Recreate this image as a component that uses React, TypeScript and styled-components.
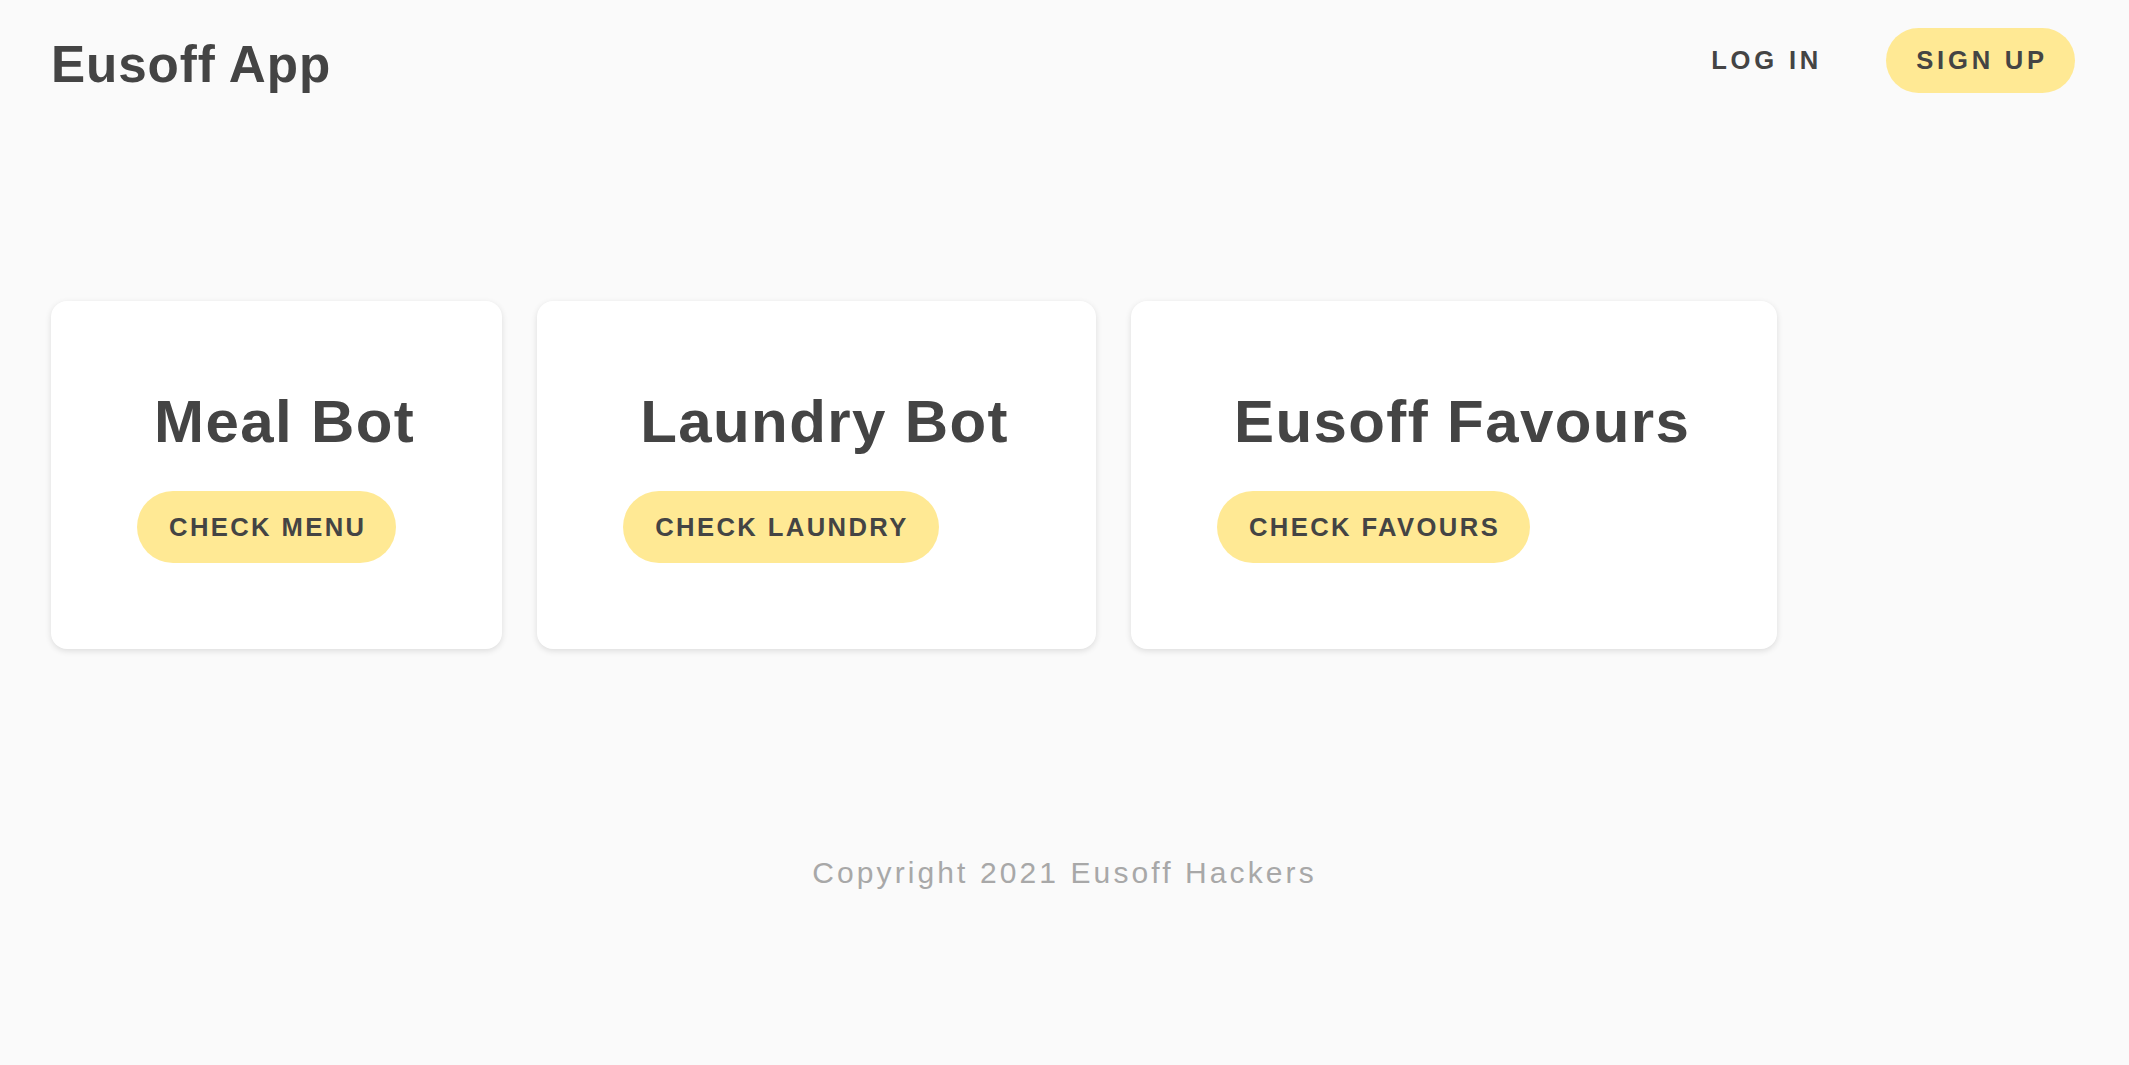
import React from "react";
import styled, { createGlobalStyle } from "styled-components";

const GlobalStyle = createGlobalStyle`
  html, body {
    margin: 0;
    padding: 0;
    background: #fafafa;
    font-family: "Liberation Sans", Arial, Helvetica, sans-serif;
    color: #444444;
  }
  * { box-sizing: border-box; }
`;

const Page = styled.div`
  min-height: 1065px;
  background: #fafafa;
  display: flex;
  flex-direction: column;
`;

const Header = styled.header`
  display: flex;
  align-items: flex-start;
  justify-content: space-between;
  padding: 28px 54px 0 51px;
`;

const Brand = styled.h1`
  margin: 7px 0 0 0;
  font-size: 51.2px;
  font-weight: 700;
  letter-spacing: 0.9px;
  line-height: normal;
  color: #444444;
`;

const Nav = styled.nav`
  display: flex;
  align-items: center;
  gap: 40px;
`;

const NavButton = styled.button<{ $filled?: boolean }>`
  font-family: "Liberation Sans", Arial, Helvetica, sans-serif;
  font-size: 25.6px;
  font-weight: 700;
  letter-spacing: 3.8px;
  line-height: normal;
  color: #444444;
  height: 65px;
  padding: ${(p) => (p.$filled ? "0 27px 0 30px" : "0 24px 0 27px")};
  border: none;
  border-radius: 33px;
  background: ${(p) => (p.$filled ? "#ffe994" : "transparent")};
  cursor: pointer;
`;

const CardRow = styled.section`
  display: flex;
  align-items: flex-start;
  gap: 35px;
  padding: 207px 0 0 51px;
`;

const Card = styled.div`
  background: #ffffff;
  border-radius: 16px;
  box-shadow: 0 2px 6px rgba(0, 0, 0, 0.12);
  padding: 86px 87px 86px 86px;
  display: flex;
  flex-direction: column;
  align-items: flex-start;
`;

const CardTitle = styled.h2`
  margin: 0 0 35px 17px;
  font-size: 60px;
  font-weight: 700;
  letter-spacing: 1.4px;
  line-height: normal;
  white-space: nowrap;
  color: #444444;
`;

const CardButton = styled.button`
  font-family: "Liberation Sans", Arial, Helvetica, sans-serif;
  font-size: 25.6px;
  font-weight: 700;
  letter-spacing: 2.4px;
  line-height: normal;
  color: #444444;
  height: 72px;
  padding: 0 30px 0 32px;
  border: none;
  border-radius: 36px;
  background: #ffe994;
  white-space: nowrap;
  cursor: pointer;
`;

const Footer = styled.footer`
  padding-top: 207px;
  text-align: center;
  font-size: 30px;
  letter-spacing: 3.1px;
  line-height: normal;
  color: #a8a8a8;
`;

const cards = [
  { title: "Meal Bot", action: "CHECK MENU" },
  { title: "Laundry Bot", action: "CHECK LAUNDRY" },
  { title: "Eusoff Favours", action: "CHECK FAVOURS" },
];

export default function App() {
  return (
    <>
      <GlobalStyle />
      <Page>
        <Header>
          <Brand>Eusoff App</Brand>
          <Nav>
            <NavButton>LOG IN</NavButton>
            <NavButton $filled>SIGN UP</NavButton>
          </Nav>
        </Header>
        <CardRow>
          {cards.map((c) => (
            <Card key={c.title}>
              <CardTitle>{c.title}</CardTitle>
              <CardButton>{c.action}</CardButton>
            </Card>
          ))}
        </CardRow>
        <Footer>Copyright 2021 Eusoff Hackers</Footer>
      </Page>
    </>
  );
}
